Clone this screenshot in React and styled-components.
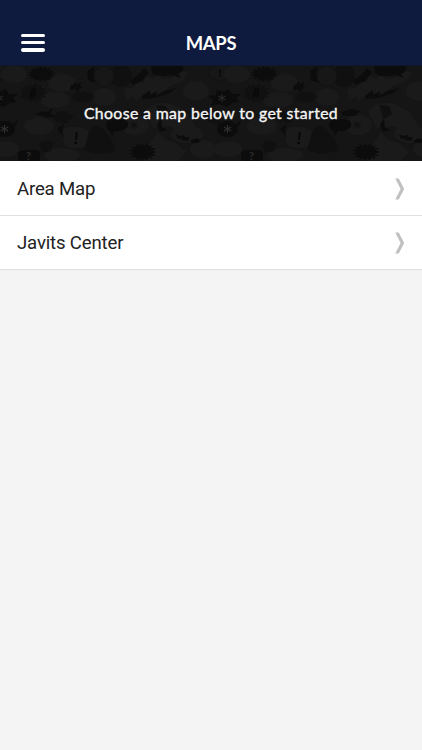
import React from 'react';
import styled, {createGlobalStyle} from 'styled-components'

const GlobalStyle = createGlobalStyle`
  body{
    margin:0;
    background:#f4f4f4;
  }
  *{
    box-sizing:border-box;
  }
`

const Screen = styled.div`
  width:100%;
  min-height:100vh;
  background:#f4f4f4;
`

const Header = styled.header`
  height:66px;
  padding:20px 21px 0 21px;
  display:grid;
  grid-template-columns:24px 1fr 24px;
  align-items:center;
  background:#0e1a3e;
  border-bottom:1px solid #11162c;
`

const MenuButton = styled.button`
  width:24px;
  height:18px;
  padding:0;
  border:0;
  background:none;
  display:flex;
  flex-direction:column;
  justify-content:space-between;
  cursor:pointer;
`

const Bar = styled.span`
  width:24px;
  height:3.6px;
  border-radius:2px;
  background:white;
`

const Title = styled.h1`
  margin:0;
  color:white;
  font-family:'Lato', sans-serif;
  font-size:18.4px;
  font-weight:bold;
  line-height:22px;
  letter-spacing:-0.25px;
  text-align:center;
`

const Banner = styled.div`
  height:95px;
  padding-bottom:2px;
  position:relative;
  display:flex;
  align-items:center;
  justify-content:center;
  background:#151515;
  overflow:hidden;
`

const Artwork = styled.svg`
  position:absolute;
  top:0;
  left:0;
  width:100%;
  height:100%;
`

const Hint = styled.p`
  position:relative;
  margin:0;
  color:#f7f7f7;
  font-family:'Lato', sans-serif;
  font-size:15.8px;
  font-weight:normal;
  line-height:20px;
  letter-spacing:0.38px;
  white-space:nowrap;
  -webkit-text-stroke:0.35px #f7f7f7;
`

const List = styled.ul`
  margin:0;
  padding:1px 0 0 0;
  list-style:none;
  background:white;
`

const Row = styled.li`
  height:54px;
  padding:0 17px;
  display:flex;
  align-items:center;
  justify-content:space-between;
  background:white;
  border-bottom:1px solid #dfdfdf;
  cursor:pointer;
`

const Label = styled.span`
  color:#222;
  font-family:'Roboto', sans-serif;
  font-size:18.6px;
  line-height:24px;
  letter-spacing:-0.17px;
`

const Arrow = styled.svg`
  width:10px;
  height:22px;
`

const TILE = 223
const WIDTH = 422

const burst = (cx, cy, rx, ry, n) => {
  const points = []
  for(let i=0;i<n*2;i++){
    const k = i % 2 ? 0.7 : 1
    const a = Math.PI * i / n
    points.push(`${(cx + Math.cos(a) * rx * k).toFixed(1)},${(cy + Math.sin(a) * ry * k).toFixed(1)}`)
  }
  return points.join(' ')
}

const Star = ({x, y, color}) => (
  <path
    d={`M${x} ${y - 4}v8M${x - 3.6} ${y - 2}l7.2 4M${x + 3.6} ${y - 2}l-7.2 4`}
    stroke={color}
    strokeWidth='1.2'
  />
)

// one tile of speech bubbles, repeated across the banner
const Bubbles = () => (
  <g>
    <g fill='#1a1a1a'>
      <ellipse cx='14' cy='8' rx='13' ry='9'/>
      <ellipse cx='62' cy='17' rx='14' ry='9'/>
      <ellipse cx='55' cy='34' rx='15' ry='8'/>
      <ellipse cx='104' cy='31' rx='12' ry='9'/>
      <path d='M124 23l11-2 1-6 7 2 3-7 7 3 5-5 5 5 8-1 11-7 7 2-6 8-13 5-9 8-10-1-5 7-4-4-6 5-2-5-8 4z'/>
      <ellipse cx='196' cy='25' rx='13' ry='10'/>
      <path d='M145 45q8-10 24-8l16 8 10 14-10 8-16-7-16 2z'/>
      <ellipse cx='39' cy='60' rx='15' ry='9'/>
      <path d='M63 66q1-6 15-5 13 1 12 12-2 11-18 9-11 0-9-16z'/>
      <ellipse cx='135' cy='59' rx='14' ry='10'/>
      <ellipse cx='187' cy='68' rx='16' ry='9'/>
      <path d='M150 78l8-12 6 7 12 4 10 9-8 9h-34z'/>
      <ellipse cx='203' cy='83' rx='13' ry='9'/>
      <ellipse cx='62' cy='89' rx='18' ry='7'/>
      <ellipse cx='5' cy='83' rx='14' ry='8'/>
    </g>
    <g fill='#0c0c0c'>
      <polygon points={burst(41.5, 8, 14, 8, 15)}/>
      <path d='M151 0h32q1 6-5 8l3 4-9-3q-16 3-20-2z'/>
      <path d='M-6 23l5 3 7-3 3 5 9 0-5 4 3 4-7 1-5 4-8-3-8 2 2-6-5-4 8-1z'/>
      <path d='M71 19l3-1 0-3 3 3 4-2-1 4 3 2-4 1-2 4-2-4-5 1z'/>
      <path d='M35 49l7-4 5 1 6-4-3 6 6 2-9 2-7-3z'/>
      <path d='M143 29l7-5 0 5 7-4-1 5 8-5 13-3-9 6-14 4-12 1z'/>
      <ellipse cx='4.5' cy='63' rx='10.5' ry='8'/>
      <path d='M13 58l5-4-2 6zM106 58q1-6 12-5 12 0 10 7-3 6-13 5l-3 5-2-5q-4-2-4-7z'/>
      <polygon points={burst(143, 86, 14, 9, 15)}/>
      <path d='M18 86q2-2 11-2 11-1 11 3v7q-2 2-11 2-11 1-11-3z'/>
      <path d='M62 69l-5-6 7-5-2 7 2 7zM91 82l5-8-1 8-8 5zM118 46l11-3 8 2-5 5-12 0z'/>
      <path d='M176 68l4 2 5-1-1 3-6 1zM184 71h6l-2 4-7-1zM190 75l6-3 5 2-3 3-6 0z'/>
      <path d='M157 59l4-7 1 9 5 3-7 2zM87 5l8-5-2 9 3 8-8-3zM130 15l9-7 5-6 5 4-7 9-9 4z'/>
    </g>
    <g fill='#101010'>
      <circle cx='121' cy='10' r='11'/>
      <polygon points={burst(33, 27, 14, 10, 14)}/>
      <polygon points={burst(83, 31, 13, 6, 13)}/>
      <path d='M53 51q5-8 13-5l8 4-7 7-11-1zM89 66q7-11 14-3l8 9 5 13-18 3-14-4z'/>
      <path d='M203 49l11-6 9 5-4 11-10-3zM39 78q5-6 14-2l-2 9-9 2zM156 39l10 1 3 8-8 5z'/>
    </g>
    <g fill='#171717' stroke='#111' strokeWidth='.7'>
      <circle cx='104' cy='10' r='10'/>
      <path d='M209 7q1-8 11-8 12 0 11 8-1 7-9 7l-5 3v-3q-8-1-8-7z'/>
    </g>
    <Star x={4.5} y={63} color='#303030'/>
    <Star x={-1} y={32} color='#282828'/>
    <Star x={134} y={59} color='#101010'/>
  </g>
)

const marks = [
  {char:'!', x:220, y:11, size:11, color:'#060606'},
  {char:'!', x:76, y:78, size:17, color:'#060606', slant:true},
  {char:'?', x:28.5, y:94, size:11, color:'#2b2b2b'},
  {char:'#', x:33, y:32, size:13, color:'#080808'},
]

const Mark = ({data, offset}) => (
  <text
    x={data.x + offset}
    y={data.y}
    fontFamily='Lato, sans-serif'
    fontSize={data.size}
    fontWeight='bold'
    fontStyle={data.slant ? 'italic' : 'normal'}
    textAnchor='middle'
    fill={data.color}
  >
    {data.char}
  </text>
)

const Chevron = () => (
  <Arrow viewBox='0 0 10 22'>
    <path d='M0.3 0.5h3.4L9.2 11 3.7 21.5H.3L5.6 11z' fill='#c0c0c0'/>
  </Arrow>
)

const maps = ['Area Map', 'Javits Center']

const App = () => {
  return (
    <Screen>
      <GlobalStyle/>
      <Header>
        <MenuButton aria-label='Menu'>
          <Bar/>
          <Bar/>
          <Bar/>
        </MenuButton>
        <Title>MAPS</Title>
      </Header>
      <Banner>
        <Artwork aria-hidden='true'>
          {[-1, 0, 1].map(n => (
            <g key={n} transform={`translate(${n * TILE} 0)`}>
              <Bubbles/>
            </g>
          ))}
          {[0, TILE].map(offset => marks
            .filter(data => data.x + offset < WIDTH)
            .map((data, index) => (
              <Mark data={data} offset={offset} key={`${offset}-${index}`}/>
            ))
          )}
        </Artwork>
        <Hint>Choose a map below to get started</Hint>
      </Banner>
      <List>
        {maps.map(name => (
          <Row key={name}>
            <Label>{name}</Label>
            <Chevron/>
          </Row>
        ))}
      </List>
    </Screen>
  )
}

export default App;
